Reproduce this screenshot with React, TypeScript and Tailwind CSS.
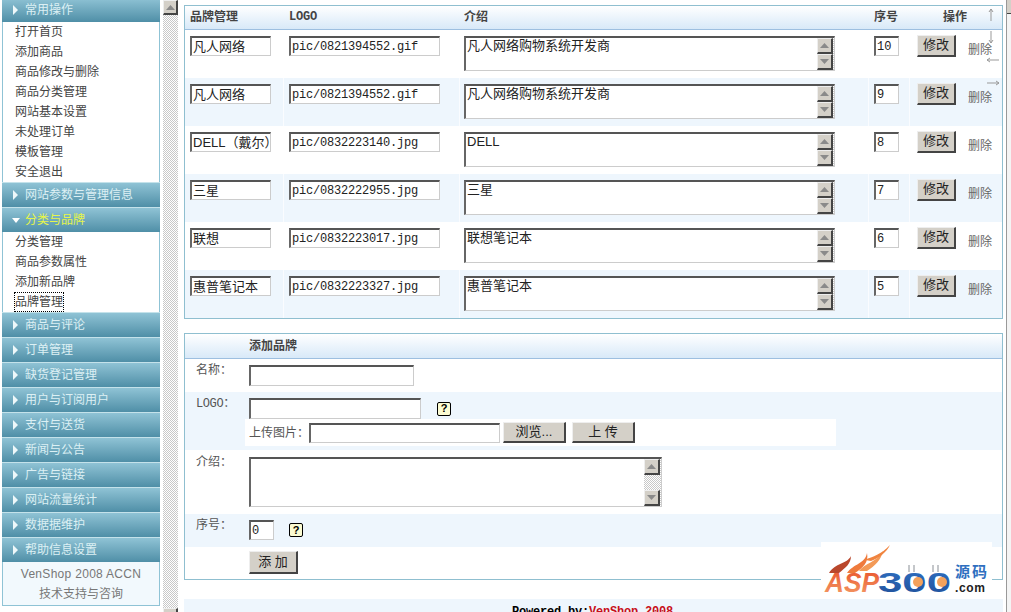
const CJK = "font-['Liberation_Sans','Noto_Sans_CJK_SC',sans-serif]";
const MONO = "font-['Liberation_Mono','Noto_Sans_CJK_SC',monospace]";
const INSET = "border-t-2 border-l-2 border-b border-r border-t-[#555] border-l-[#666] border-b-[#ccc] border-r-[#ccc] bg-white outline-none";
const OUTSET = "border border-t-[#eee] border-l-[#eee] border-b-2 border-r-2 border-b-[#444] border-r-[#444] bg-[#d4d0c8] text-[#222]";
const DITHER = "bg-[repeating-conic-gradient(#c8c8c8_0_25%,#ffffff_0_50%)] bg-[length:2px_2px]";

const BRANDS = [
  { name: "凡人网络", logo: "pic/0821394552.gif", intro: "凡人网络购物系统开发商", order: "10" },
  { name: "凡人网络", logo: "pic/0821394552.gif", intro: "凡人网络购物系统开发商", order: "9" },
  { name: "DELL（戴尔）", logo: "pic/0832223140.jpg", intro: "DELL", order: "8" },
  { name: "三星", logo: "pic/0832222955.jpg", intro: "三星", order: "7" },
  { name: "联想", logo: "pic/0832223017.jpg", intro: "联想笔记本", order: "6" },
  { name: "惠普笔记本", logo: "pic/0832223327.jpg", intro: "惠普笔记本", order: "5" },
];

const AFTER_BRAND = ["商品与评论", "订单管理", "缺货登记管理", "用户与订阅用户", "支付与送货", "新闻与公告", "广告与链接", "网站流量统计", "数据据维护", "帮助信息设置"];

function MenuHeader({ label, open, className = "" }: { label: string; open?: boolean; className?: string }) {
  return (
    <div className={`flex h-[25px] items-center border-t border-[#c4e2ea] bg-gradient-to-b from-[#8fc3d5] to-[#4f8fa7] pl-[10px] text-[12px] ${open ? "text-[#e6f54a]" : "text-[#dcf0f4]"} ${className}`}>
      <svg width="8" height="10" viewBox="0 0 8 10" className="mr-[5px] shrink-0">
        {open ? <polygon points="0,3 8,3 4,8" fill="#fff" /> : <polygon points="1,0 6,5 1,10" fill="#eef8fa" />}
      </svg>
      <span>{label}</span>
    </div>
  );
}

function MenuItems({ items, focus }: { items: string[]; focus?: string }) {
  return (
    <div className="border-x border-[#8fc3d5] bg-white pl-[12px] text-[12px] text-[#444]">
      {items.map((item) => (
        <div key={item} className="flex h-[20px] items-center">
          <span className={item === focus ? "outline-1 outline-dotted outline-black" : ""}>{item}</span>
        </div>
      ))}
    </div>
  );
}

function Triangle({ up }: { up?: boolean }) {
  return (
    <svg width="9" height="5" viewBox="0 0 9 5">
      <polygon points={up ? "4.5,0 9,5 0,5" : "0,0 9,0 4.5,5"} fill="#8a8a8a" />
    </svg>
  );
}

function ScrollButton({ up }: { up?: boolean }) {
  return (
    <div className={`flex h-[16px] w-[16px] items-center justify-center ${OUTSET}`}>
      <Triangle up={up} />
    </div>
  );
}

function TextBox({ value, className }: { value: string; className: string }) {
  return (
    <div className={`flex justify-between overflow-hidden ${INSET} ${className}`}>
      <span className={`pl-[1px] text-[13px] leading-[15px] text-[#222] ${CJK}`}>{value}</span>
      <div className={`flex h-full w-[17px] flex-col justify-between pr-[1px] ${DITHER}`}>
        <ScrollButton up />
        <ScrollButton />
      </div>
    </div>
  );
}

function Help() {
  return (
    <span className="flex h-[14px] w-[14px] items-center justify-center rounded-[2px] border border-black bg-[#fbfbd2] font-['Liberation_Sans',sans-serif] text-[11px] leading-none font-bold text-black">
      ?
    </span>
  );
}

function BrandRow({ brand, alt }: { brand: (typeof BRANDS)[number]; alt: boolean }) {
  const cell = `h-[48px] border-r ${alt ? "border-white/70" : "border-transparent"} pt-[6px]`;
  return (
    <div className={`grid grid-cols-[99px_176px_409px_41px_92px] ${alt ? "bg-[#eef6fd]" : "bg-white"}`}>
      <div className={`${cell} pl-[5px]`}>
        <input readOnly value={brand.name} className={`h-[20px] w-[81px] pb-[3px] pl-[1px] text-[13px] text-[#222] ${CJK} ${INSET}`} />
      </div>
      <div className={`${cell} pl-[5px]`}>
        <input readOnly value={brand.logo} className={`h-[20px] w-[151px] pl-[1px] text-[12px] tracking-[-0.2px] text-[#222] ${MONO} ${INSET}`} />
      </div>
      <div className={`${cell} pl-[4px]`}>
        <TextBox value={brand.intro} className="h-[35px] w-[371px]" />
      </div>
      <div className={`${cell} pl-[5px]`}>
        <input readOnly value={brand.order} className={`h-[20px] w-[25px] pl-[1px] text-[12px] text-[#222] ${MONO} ${INSET}`} />
      </div>
      <div className="flex h-[48px] items-start pt-[5px] pl-[7px]">
        <button type="button" className={`h-[22px] w-[39px] pb-[2px] text-[13px] leading-none ${CJK} ${OUTSET}`}>修改</button>
        <span className="mt-[6px] ml-[12px] text-[12px] text-[#666]">删除</span>
      </div>
    </div>
  );
}

function Arrow({ d, className }: { d: string; className: string }) {
  return (
    <svg width="12" height="14" viewBox="0 0 12 14" className={`absolute ${className}`}>
      <path d={d} fill="none" stroke="#999" strokeWidth="1" />
    </svg>
  );
}

function SiteLogo() {
  return (
    <svg width="171" height="56" viewBox="0 0 171 56" className="absolute top-[542px] left-[643px]">
      <defs>
        <linearGradient id="red" x1="0" y1="0" x2="0" y2="1">
          <stop offset="0" stopColor="#e8502a" />
          <stop offset="1" stopColor="#f5a06a" />
        </linearGradient>
        <linearGradient id="blue" x1="0" y1="0" x2="0" y2="1">
          <stop offset="0" stopColor="#2f6fc0" />
          <stop offset="1" stopColor="#1f4f9a" />
        </linearGradient>
      </defs>
      <rect width="171" height="56" fill="#fff" />
      <path d="M8 31 C14 21 26 22 30 14 C30 22 24 26 18 31 Z" fill="#b9472c" />
      <path d="M26 31 C32 22 44 22 46 11 C48 20 42 26 34 31 Z" fill="#ef7a3c" />
      <path d="M38 29 C44 21 56 20 62 9 C60 18 54 24 46 29 Z" fill="#f39a57" />
      <path d="M44 18 C52 14 60 13 69 3 C66 10 58 16 50 19 Z" fill="#f0843f" />
      <text x="4" y="50" textLength="54" lengthAdjust="spacingAndGlyphs" fontFamily="Liberation Sans" fontSize="27" fontWeight="700" fontStyle="italic" fill="url(#red)">ASP</text>
      <text x="57" y="50" textLength="73" lengthAdjust="spacingAndGlyphs" fontFamily="Liberation Sans" fontSize="27" fontWeight="700" fill="url(#blue)">300</text>
      <circle cx="97" cy="40" r="5" fill="#f3a25c" />
      <circle cx="121" cy="40" r="5" fill="#f3a25c" />
      <path d="M88 23 v7 M93 23 v7 M112 23 v7 M117 23 v7" stroke="#8a8f96" strokeWidth="1" />
      <text x="134" y="35" textLength="32" fontFamily="Noto Sans CJK SC" fontSize="15" fontWeight="700" fill="#2f6fc0">源码</text>
      <text x="134" y="50" textLength="30" fontFamily="Liberation Sans" fontSize="12" fontWeight="700" fill="#222">.com</text>
    </svg>
  );
}

export default function App() {
  return (
    <div className={`flex h-[612px] w-[1011px] overflow-hidden bg-white text-[12px] ${CJK}`}>
      {/* left menu */}
      <aside className="h-full w-[160px] shrink-0 pl-[2px]">
        <MenuHeader label="常用操作" className="-mt-[3px]" />
        <MenuItems items={["打开首页", "添加商品", "商品修改与删除", "商品分类管理", "网站基本设置", "未处理订单", "模板管理", "安全退出"]} />
        <MenuHeader label="网站参数与管理信息" />
        <MenuHeader label="分类与品牌" open />
        <MenuItems items={["分类管理", "商品参数属性", "添加新品牌", "品牌管理"]} focus="品牌管理" />
        {AFTER_BRAND.map((label) => (
          <MenuHeader key={label} label={label} />
        ))}
        <div className="flex h-[44px] flex-col items-center border border-t-0 border-[#8fc3d5] bg-[#f2f9fd] pt-[2px] text-[12px] leading-[20px] text-[#777]">
          <span className="tracking-[0.3px]">VenShop 2008 ACCN</span>
          <span>技术支持与咨询</span>
        </div>
      </aside>

      {/* frame scrollbar */}
      <div className={`ml-[3px] flex h-full w-[15px] shrink-0 flex-col justify-between ${DITHER}`}>
        <div className={`flex h-[15px] items-center justify-center ${OUTSET}`}>
          <Triangle up />
        </div>
        <div className={`-mb-[11px] h-[15px] ${OUTSET}`} />
      </div>

      {/* content */}
      <main className="relative h-full w-[828px] shrink-0 pt-[5px] pl-[6px]">
        <div className="relative w-[819px] border border-[#8fbfd0]">
          <div className="grid h-[24px] grid-cols-[99px_176px_409px_41px_92px] items-center border-b border-[#9dbfe0] bg-gradient-to-b from-white to-[#d8e9f8] pb-[2px] text-[12px] font-bold text-[#444]">
            <span className="pl-[5px]">品牌管理</span>
            <span className={`pl-[5px] text-[12px] tracking-[-0.2px] ${MONO}`}>LOGO</span>
            <span className="pl-[4px]">介绍</span>
            <span className="pl-[5px]">序号</span>
            <span className="pl-[33px]">操作</span>
          </div>
          {BRANDS.map((brand, i) => (
            <BrandRow key={i} brand={brand} alt={i % 2 === 1} />
          ))}
          <Arrow d="M6 1 V13 M4 4 L6 1 L8 4" className="top-[2px] left-[800px]" />
          <Arrow d="M6 1 V13 M4 10 L6 13 L8 10" className="top-[24px] left-[800px]" />
          <Arrow d="M0 7 H12 M3 5 L0 7 L3 9" className="top-[47px] left-[802px]" />
          <Arrow d="M0 7 H12 M9 5 L12 7 L9 9" className="top-[70px] left-[802px]" />
        </div>

        <div className="mt-[14px] w-[819px] border border-[#8fbfd0]">
          <div className="flex h-[25px] items-center border-b border-[#9dbfe0] bg-gradient-to-b from-white to-[#d8e9f8] pl-[64px] text-[12px] font-bold text-[#444]">
            添加品牌
          </div>
          <div className="flex h-[33px] bg-white">
            <span className="w-[64px] pt-[2px] pl-[11px] text-[#555]">名称：</span>
            <div className="pt-[6px]">
              <input readOnly className={`block h-[21px] w-[165px] ${INSET}`} />
            </div>
          </div>
          <div className="flex h-[58px] bg-[#eef6fd]">
            <span className="w-[64px] pt-[2px] pl-[11px] text-[#555]">
              <span className={`text-[12px] tracking-[-0.4px] ${MONO}`}>LOGO</span>：
            </span>
            <div className="pt-[6px]">
              <div className="flex items-center">
                <input readOnly className={`block h-[21px] w-[172px] ${INSET}`} />
                <span className="ml-[16px]"><Help /></span>
              </div>
              <div className="-ml-[4px] flex h-[27px] w-[591px] items-center bg-white pl-[4px] text-[#555]">
                <span className="w-[60px]">上传图片：</span>
                <input readOnly className={`block h-[20px] w-[191px] ${INSET}`} />
                <button type="button" className={`ml-[3px] h-[21px] w-[63px] pb-[1px] text-[13px] leading-none ${CJK} ${OUTSET}`}>浏览...</button>
                <button type="button" className={`ml-[6px] h-[21px] w-[63px] pb-[1px] text-[13px] leading-none ${CJK} ${OUTSET}`}>上 传</button>
              </div>
            </div>
          </div>
          <div className="flex h-[64px] bg-white">
            <span className="w-[64px] pt-[3px] pl-[11px] text-[#555]">介绍：</span>
            <div className="pt-[7px]">
              <TextBox value="" className="h-[50px] w-[413px]" />
            </div>
          </div>
          <div className="flex h-[33px] bg-[#eef6fd]">
            <span className="w-[64px] pt-[2px] pl-[11px] text-[#555]">序号：</span>
            <div className="flex items-center pb-[1px]">
              <input readOnly value="0" className={`block h-[20px] w-[25px] pl-[1px] text-[12px] text-[#222] ${MONO} ${INSET}`} />
              <span className="ml-[15px]"><Help /></span>
            </div>
          </div>
          <div className="h-[32px] bg-white pt-[4px] pl-[64px]">
            <button type="button" className={`block h-[23px] w-[49px] pb-[2px] text-[13px] leading-none ${CJK} ${OUTSET}`}>添 加</button>
          </div>
        </div>

        <div className={`mt-[19px] h-[30px] w-[819px] bg-[#eef6fd] pt-[4px] pl-[328px] text-[12px] font-bold tracking-[-0.2px] text-black ${MONO}`}>
          Powered by:<span className="text-[#c8101a]">VenShop 2008</span>
        </div>

        <SiteLogo />
      </main>

      {/* right scrollbar edge */}
      <div className="h-full flex-1 border-l border-[#999] bg-[#f4f4f4]">
        <div className="h-[14px] border-b border-[#444] bg-[#d4d0c8]" />
      </div>
    </div>
  );
}
